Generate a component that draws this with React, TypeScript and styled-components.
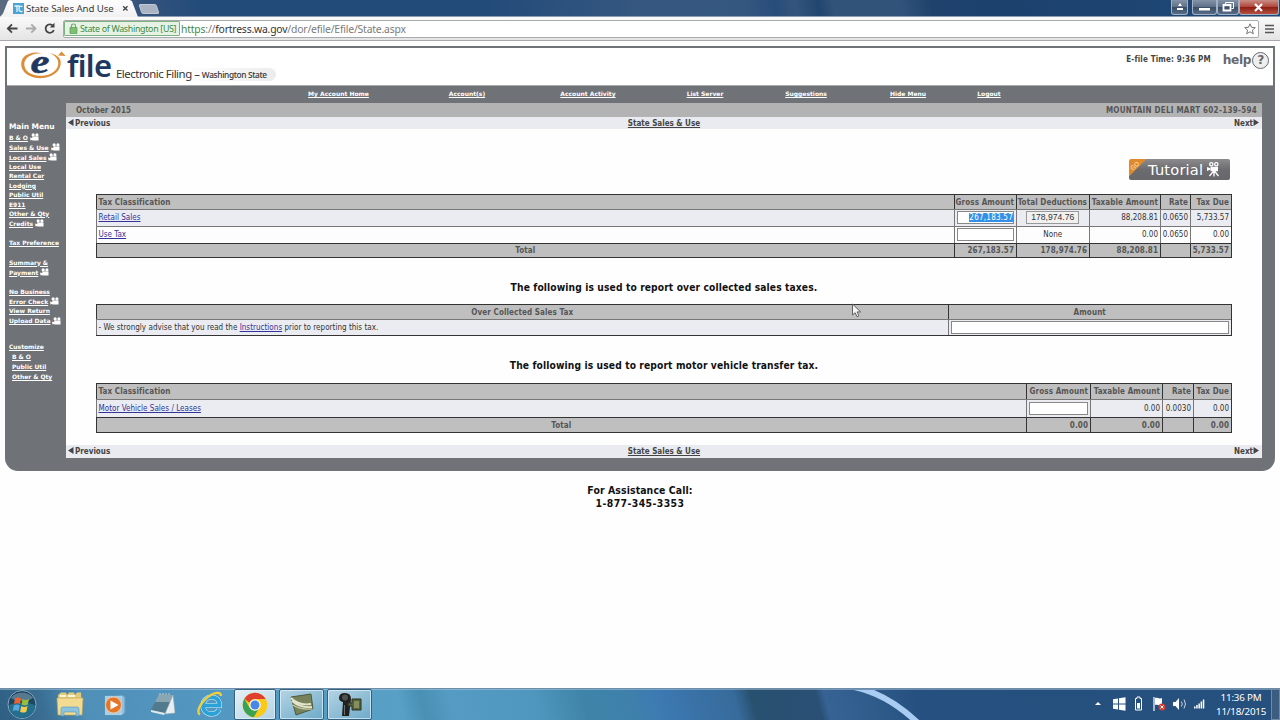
import { ReactNode } from "react";
import styled, { createGlobalStyle, css } from "styled-components";

const GlobalStyle = createGlobalStyle`
  * {
    box-sizing: border-box;
  }

  body {
    margin: 0;
    background: #fefefe;
    color: #444;
    font-family: "DejaVu Sans Condensed", "DejaVu Sans", Tahoma, sans-serif;
    font-size: 8px;
    overflow: hidden;
  }
`;

const uiFont = `"Noto Sans", "Open Sans", sans-serif`;

interface IMenuEntry {
  name: string;
  height: number;
  video?: boolean;
  indent?: boolean;
  gap?: number;
}

interface ICell {
  text?: ReactNode;
  align?: "left" | "center" | "right";
}

const TOP_MENU = [
  "My Account Home",
  "Account(s)",
  "Account Activity",
  "List Server",
  "Suggestions",
  "Hide Menu",
  "Logout",
];

const SIDE_MENU: IMenuEntry[] = [
  { name: "B & O", height: 10, video: true },
  { name: "Sales & Use", height: 10, video: true },
  { name: "Local Sales", height: 10, video: true },
  { name: "Local Use", height: 9 },
  { name: "Rental Car", height: 9.5 },
  { name: "Lodging", height: 9.5 },
  { name: "Public Util", height: 9.5 },
  { name: "E911", height: 9 },
  { name: "Other & Qty", height: 9.5 },
  { name: "Credits", height: 10.5, video: true },
  { name: "Tax Preference", height: 10, gap: 9 },
  { name: "Summary &", height: 10, gap: 9.5 },
  { name: "Payment", height: 10, video: true },
  { name: "No Business", height: 10, gap: 9 },
  { name: "Error Check", height: 10, video: true },
  { name: "View Return", height: 9.5 },
  { name: "Upload Data", height: 10, video: true },
  { name: "Customize", height: 10, gap: 16 },
  { name: "B & O", height: 10, indent: true },
  { name: "Public Util", height: 10, indent: true },
  { name: "Other & Qty", height: 10, indent: true },
];

/* ---------- browser window ---------- */

const Desktop = styled.div`
  position: relative;
  display: flex;
  flex-direction: column;
  width: 1280px;
  height: 720px;
  overflow: hidden;
`;

const TitleBar = styled.div`
  display: flex;
  flex: none;
  height: 17px;
  border-bottom: 1px solid #8c9db3;
  background: linear-gradient(
    80deg,
    #5b6b80 0,
    #35547c 140px,
    #234b7a 200px,
    #234b7a 480px,
    #365880 640px,
    #34577f 735px,
    #284d7a 765px,
    #34557d 785px,
    #21466f 808px,
    #315279 822px,
    #315279 890px,
    #1e426c 920px,
    #1c416d 1000px,
    #204a79 100%
  );
`;

const Tab = styled.div`
  display: flex;
  align-items: center;
  width: 138px;
  height: 17px;
  padding: 0 8px 0 13px;
  background: linear-gradient(#fdfdfd, #f1f1f1);
  clip-path: polygon(0 100%, 3px 80%, 8px 5%, 10px 0, 130px 0, 132px 8%, 138px 100%);
  color: #3c3c3c;
  font: 9.7px/16px ${uiFont};
  letter-spacing: -0.1px;
  white-space: nowrap;

  svg {
    flex: none;
  }

  span {
    width: 96px;
    margin-left: 2px;
  }
`;

const NewTab = styled.div`
  width: 18px;
  height: 10px;
  margin: 4px 0 0 2px;
  border: 1px solid #c1cad6;
  border-radius: 2px;
  background: #aab4c2;
  transform: skewX(18deg);
`;

const WindowButtons = styled.div`
  display: flex;
  height: 15px;
  margin-left: auto;
`;

const WindowButton = styled.div<{ $width: number; $close?: boolean; $gap?: number }>`
  display: flex;
  align-items: center;
  justify-content: center;
  width: ${(p) => p.$width}px;
  margin-right: ${(p) => p.$gap || 0}px;
  border: 1px solid #a3b0c2;
  border-top: 0;
  border-radius: 0 0 3px 3px;
  background: ${(p) =>
    p.$close
      ? "linear-gradient(#c98e88, #b0463b 48%, #8d1d14 52%, #b5503f)"
      : "linear-gradient(#8493a7, #5f7088 48%, #3b4d66 52%, #566b87)"};
`;

const Toolbar = styled.div`
  display: flex;
  flex: none;
  align-items: center;
  height: 24px;
  padding: 0 5px;
  border-bottom: 1px solid #a7a7a9;
  background: linear-gradient(#fafafa, #e4e4e4);

  > svg {
    flex: none;
  }
`;

const Omnibox = styled.div`
  display: flex;
  align-items: center;
  flex: 1;
  height: 18px;
  margin: 0 6px 0 7px;
  padding: 0 2px 0 0;
  border: 1px solid #a9abaf;
  border-radius: 2px;
  background: #fff;
`;

const Certificate = styled.div`
  display: flex;
  align-items: center;
  width: 116px;
  height: 15px;
  padding-left: 4px;
  border: 1px solid #7fb083;
  border-radius: 1px;
  background: #e6f3e4;
  color: #3f8a45;
  font: 8.9px/14px ${uiFont};
  letter-spacing: -0.32px;
  white-space: nowrap;

  span {
    margin-left: 2px;
  }
`;

const Url = styled.div`
  flex: 1;
  margin-left: 1px;
  color: #7a7a7a;
  font: 10.4px/16px ${uiFont};
  letter-spacing: -0.2px;

  em {
    color: #3f8a45;
    font-style: normal;
  }

  b {
    color: #333;
    font-weight: 400;
  }
`;

/* ---------- e-file page ---------- */

const Page = styled.main`
  flex: 1;
  padding: 5px 5px 0;
  background: #fefefe;
`;

const Shell = styled.div`
  width: 1270px;
  height: 425px;
  padding: 2px 2px 0;
  border-radius: 0 0 13px 13px;
  background: #6f7276;
`;

const Header = styled.header`
  display: flex;
  height: 38px;
  padding-left: 13px;
  background: #fff;
  border-bottom: 1px solid #aaa;
`;

const Brand = styled.div`
  display: flex;

  > svg {
    flex: none;
    margin-top: -8px;
  }
`;

const BrandName = styled.div`
  width: 46px;
  margin: -2px 0 0 1px;
  color: #20385f;
  font: 600 31px/39px ${uiFont};
  letter-spacing: -0.7px;
`;

const BrandTag = styled.div`
  align-self: flex-start;
  height: 13px;
  margin: 20px 0 0 3px;
  padding-right: 9px;
  border-radius: 0 7px 7px 0;
  background: linear-gradient(90deg, #fff 40%, #ececec);
  color: #333;
  font: 11.4px/12px ${uiFont};
  letter-spacing: -0.48px;
  white-space: nowrap;

  small {
    font-size: 8.3px;
    font-weight: 500;
    letter-spacing: -0.33px;
  }
`;

const HeaderTime = styled.div`
  margin: 6px 0 0 auto;
  color: #444;
  font-size: 8px;
  font-weight: 700;
  line-height: 11px;
  letter-spacing: 0.16px;
`;

const Help = styled.div`
  display: flex;
  align-items: flex-start;
  margin: 4px 4px 0 12px;
  color: #66686c;
  font: 700 12.2px/16px "DejaVu Sans", sans-serif;
  letter-spacing: -0.4px;
`;

const HelpMark = styled.span`
  width: 17px;
  height: 17px;
  margin-left: 1px;
  border: 1.5px solid #66686c;
  border-radius: 50%;
  background: #eee;
  line-height: 14px;
  text-align: center;
`;

const linkText = css`
  color: #fff;
  font: 700 6px/9px "DejaVu Sans", sans-serif;
  text-decoration: underline;
  white-space: nowrap;
`;

const TopMenu = styled.nav`
  display: grid;
  grid-template-columns: 127px 130px 112px 122px 80px 124px 38px;
  height: 17px;
  padding: 3px 0 0 268px;
  text-align: center;

  a {
    ${linkText}
    letter-spacing: 0;
  }
`;

const Body = styled.div`
  display: flex;
`;

const Sidebar = styled.aside`
  flex: none;
  width: 59px;
  padding: 18px 0 0 2px;
`;

const SidebarTitle = styled.div`
  height: 11px;
  color: #fff;
  font: 700 7.5px/12px "DejaVu Sans", sans-serif;
  letter-spacing: -0.1px;
  white-space: nowrap;
`;

const SidebarItem = styled.div<{ $height: number; $gap?: number; $indent?: boolean }>`
  display: flex;
  align-items: center;
  height: ${(p) => p.$height}px;
  margin-top: ${(p) => p.$gap || 0}px;
  padding-left: ${(p) => (p.$indent ? 3 : 0)}px;

  a {
    ${linkText}
    letter-spacing: -0.03px;
  }

  svg {
    flex: none;
    margin-left: 2px;
  }
`;

const Panel = styled.section`
  width: 1196px;
  height: 355px;
  background: #fefefe;
`;

const PeriodBar = styled.div`
  display: flex;
  justify-content: space-between;
  height: 14px;
  padding: 0 5px 0 10px;
  background: #b3b3b3;
  color: #555;
  font-weight: 700;
  line-height: 15px;

  span:last-child {
    letter-spacing: 0.26px;
  }
`;

const Pager = styled.div<{ $height: number }>`
  display: grid;
  grid-template-columns: 1fr 1fr 1fr;
  align-items: center;
  height: ${(p) => p.$height}px;
  padding: 1px 2px 0;
  background: #e9ebf0;
  color: #444;
  font-weight: 700;
  line-height: 12px;

  svg {
    margin-right: 1px;
  }

  span:nth-child(2) {
    text-align: center;
    text-decoration: underline;
  }

  span:nth-child(3) {
    text-align: right;
  }
`;

const Forms = styled.div`
  display: flex;
  flex-direction: column;
  height: 316px;
  padding: 30px 30px 0;
`;

const TutorialButton = styled.div`
  display: flex;
  align-items: center;
  align-self: flex-end;
  width: 101px;
  height: 21px;
  margin: 0 2px 14px 0;
  border-radius: 2px;
  background: linear-gradient(135deg, #e08a2e 12px, transparent 12.5px),
    linear-gradient(#8c8c8e, #6c6c70 50%, #67686c);
  color: #fff;
  font: 14.6px/20px "DejaVu Sans", sans-serif;
  letter-spacing: 0.2px;

  i {
    width: 12px;
    margin: -8px 7px 0 0;
    color: #ffe2b8;
    font: 6px/8px "DejaVu Sans", sans-serif;
    text-align: center;
    transform: rotate(-45deg);
  }

  svg {
    margin-left: 4px;
  }
`;

const SectionTitle = styled.h2<{ $height: number }>`
  flex: none;
  height: ${(p) => p.$height}px;
  margin: 0;
  padding: 1px 0 0;
  color: #111;
  font-size: 10.2px;
  font-weight: 700;
  line-height: 58px;
  letter-spacing: 0.12px;
  text-align: center;
`;

const Table = styled.div<{ $columns: string }>`
  display: grid;
  flex: none;
  grid-template-columns: ${(p) => p.$columns};
  width: 1136px;
  border: solid #333;
  border-width: 0 1px 1px 0;
`;

const Cell = styled.div<{
  $kind: "head" | "odd" | "even" | "total";
  $height: number;
  $align?: string;
}>`
  display: flex;
  align-items: center;
  justify-content: ${(p) =>
    p.$align === "left" ? "flex-start" : p.$align === "right" ? "flex-end" : "center"};
  height: ${(p) => p.$height}px;
  padding: 0 2px 1px 1.5px;
  border-top: 1px solid #777;
  border-left: 1px solid #777;
  background: ${(p) => (p.$kind === "odd" ? "#eaecf2" : "#fdfdfe")};
  color: #333;
  letter-spacing: 0.02px;
  white-space: pre;

  ${(p) =>
    (p.$kind === "head" || p.$kind === "total") &&
    css`
      padding-bottom: 0;
      border-color: #333;
      background: #bfbfbf;
      color: #555;
      font-weight: 700;
      letter-spacing: 0.1px;
    `}
`;

const Link = styled.a`
  color: #33339a;
  text-decoration: underline;
`;

const Field = styled.div<{ $width: number }>`
  display: flex;
  align-items: center;
  justify-content: flex-end;
  width: ${(p) => p.$width}px;
  height: 13px;
  border: 1px solid #888;
  background: #fff;
`;

const Selected = styled.span`
  background: #3390e8;
  color: #fff;
  letter-spacing: 0.25px;
`;

const AmountButton = styled.div`
  width: 53px;
  height: 13px;
  border: 1px solid #999;
  background: #f1f1f1;
  color: #333;
  font: 8.6px/11px "Liberation Sans", sans-serif;
  letter-spacing: 0;
  text-align: center;
`;

const Assistance = styled.footer`
  padding-top: 13px;
  color: #111;
  font-size: 10.4px;
  font-weight: 700;
  line-height: 13px;
  letter-spacing: 0.1px;
  text-align: center;

  span {
    letter-spacing: 0.4px;
  }
`;

const Cursor = styled.svg`
  position: absolute;
  top: 303px;
  left: 851px;
`;

/* ---------- taskbar ---------- */

const Taskbar = styled.div`
  display: flex;
  flex: none;
  align-items: center;
  height: 32px;
  border-top: 1px solid #6f8ca7;
  box-shadow: inset 0 1px 0 rgba(190, 215, 235, 0.45);
  background: linear-gradient(
    75deg,
    #2f5f83 0,
    #3a6f93 45px,
    #4f8fb8 85px,
    #549bc4 260px,
    #58a0c6 390px,
    #4a90b4 412px,
    #559bc3 440px,
    #4f97be 520px,
    #3f84a8 570px,
    #3e80ab 615px,
    #3d7ab3 640px,
    #3a73a8 670px,
    #376b9b 715px,
    #28506f 732px,
    #2a5075 795px,
    #376394 803px,
    #2f5b8b 850px,
    #25507f 890px,
    #26507d 100%
  );
`;

const Swoosh = styled.svg`
  position: absolute;
  top: 690px;
  left: 840px;
`;

const TaskIcons = styled.div`
  display: flex;
  align-items: center;
  height: 31px;
`;

const TaskButton = styled.div<{ $width: number; $open?: boolean; $active?: boolean }>`
  display: flex;
  align-items: center;
  justify-content: center;
  width: ${(p) => p.$width}px;
  height: 31px;

  ${(p) =>
    p.$open &&
    css`
      margin-right: 3px;
      border: 1px solid #35617f;
      border-radius: 2px;
      box-shadow: inset 0 0 0 1px rgba(230, 244, 252, 0.7);
      background: ${p.$active
        ? "linear-gradient(150deg, #e5f0f6, #b2d2e4)"
        : "linear-gradient(150deg, #b5d3e3, #6dabc9)"};
    `}
`;

const Tray = styled.div`
  display: flex;
  align-items: center;
  height: 31px;
  margin-left: auto;
`;

const Clock = styled.div`
  width: 50px;
  margin: 0 5px 0 6px;
  color: #fff;
  font: 9.8px/14px ${uiFont};
  letter-spacing: -0.2px;
  text-align: center;
  white-space: nowrap;
`;

const ShowDesktop = styled.div`
  width: 9px;
  height: 31px;
  border: 1px solid #7089a5;
  background: #3c5c80;
`;

const VideoIcon = () => (
  <svg width="9" height="8" viewBox="0 0 10 9" fill="#fff">
    <circle cx="3.500" cy="2.200" r="1.800" />
    <circle cx="7.700" cy="2.200" r="1.800" />
    <path d="M2.500 4h7v4.300h-7zM0 5l3 1v1.500L.5 8.500z" />
  </svg>
);

const CameraIcon = () => (
  <svg width="13" height="15" viewBox="0 0 13 15" fill="#fff">
    <path
      fillRule="evenodd"
      d="M4.3 0a2.3 2.3 0 1 0 0 4.6 2.3 2.3 0 0 0 0-4.6zm0 1.3a1 1 0 1 1 0 2 1 1 0 0 1 0-2zM9.3 0a2.3 2.3 0 1 0 0 4.6 2.3 2.3 0 0 0 0-4.6zm0 1.3a1 1 0 1 1 0 2 1 1 0 0 1 0-2z"
    />
    <path d="M3.500 4.700H11v4.600H3.500zM0 5l3.200 1.200v1.600L0 9z" />
    <path d="M7 8.500L2.500 14M7 8.500v6M7 8.500l4.500 5.500" stroke="#fff" strokeWidth="1.300" />
  </svg>
);

const BackIcon = () => (
  <svg width="19" height="13" viewBox="0 0 19 13" fill="none" stroke="#444" strokeWidth="1.800">
    <path d="M12.500 6.500H3M7 2.300L2.800 6.500 7 10.700" />
  </svg>
);

const ForwardIcon = () => (
  <svg width="19" height="13" viewBox="0 0 19 13" fill="none" stroke="#aaa" strokeWidth="1.800">
    <path d="M2 6.500h9M7.300 2.300l4.200 4.200-4.200 4.200" />
  </svg>
);

const EfileMark = () => (
  <svg width="46" height="46" viewBox="0 -10 46 46">
    <path
      d="M22 3.200C10 .6 1 6 1.200 14.500c.2 9.500 12.500 15.500 24 13.200 10-2 16-8.500 15.500-15.500C40.500 7.500 36 4.500 30 3.300c5.500 2.400 8.500 6 8.300 10.400-.3 6-6.500 11-13.800 11.800C12 27 4.500 21.500 4.300 14.500 4 8 11 3 22 3.200z"
      fill="#dc8d37"
    />
    <path d="M41.500 1.500l4.300 4.500-7.800-.5z" fill="#dc8d37" />
    <text
      x="10.500"
      y="22.500"
      fill="#20385f"
      stroke="#20385f"
      strokeWidth=".5"
      fontFamily="Liberation Serif"
      fontStyle="italic"
      fontWeight="700"
      fontSize="33"
      textLength="19"
      lengthAdjust="spacingAndGlyphs"
    >
      e
    </text>
  </svg>
);

const StartIcon = () => (
  <svg width="32" height="31" viewBox="0 0 32 31">
    <circle cx="16" cy="15.500" r="14" fill="#1f4563" stroke="#86a9be" />
    <path d="M3 16a13 13 0 0 0 26 0c-7-3-18-3-26 0z" fill="#246e8e" />
    <path d="M5 9C9 2 23 2 27 9c-5 4-17 4-22 0z" fill="#7d9cae" opacity=".6" />
    <path d="M9 9.500c2-1.200 4-1.200 6 0l-1 5.500c-2-1.100-4-1.100-6 0z" fill="#ea6330" />
    <path d="M16.500 10c2 1.200 4 1.200 6.500 0l-1.200 5.500c-2 1.200-4 1.200-6.200 0z" fill="#93bf3c" />
    <path d="M7.800 16.500c2-1.200 4-1.200 6 0l-1.200 5.700c-2-1.200-4-1.200-6 0z" fill="#55a9df" />
    <path d="M15.200 17c2 1.200 4 1.200 6.400 0l-1.300 5.700c-2 1.200-4 1.200-6.200 0z" fill="#f5cc4a" />
  </svg>
);

const FolderIcon = () => (
  <svg width="28" height="27" viewBox="0 0 28 27">
    <path d="M2 4l3-2.500h5L11 4l2-2.500h5L19 4l2-2.500h4L26 22H3z" fill="#e5cc79" />
    <path d="M4 4h6v2H4zM12 4h7v2h-7z" fill="#f9f5df" />
    <path d="M1 7h26l-1 17H2z" fill="#f2dc92" stroke="#c5a85a" strokeWidth=".7" />
    <path d="M5 25v-7q0-2 2-2h14q2 0 2 2v7h-3v-4H8v4z" fill="#8cc4df" stroke="#5795b5" strokeWidth=".6" />
  </svg>
);

const MediaIcon = () => (
  <svg width="24" height="24" viewBox="0 0 24 24">
    <path d="M2 3l17-1 3 2v16l-3 2H2z" fill="#8fc0df" stroke="#6098bd" />
    <path d="M2 3h17v19H2z" fill="#aacfe5" />
    <circle cx="10.500" cy="12" r="8" fill="#e57528" stroke="#f7c7a0" />
    <path d="M7.500 7.500l8 4.500-8 4.500z" fill="#fff" />
  </svg>
);

const NotesIcon = () => (
  <svg width="26" height="25" viewBox="0 0 26 25">
    <path d="M9 2l14 1-8 18L1 18z" fill="#52798c" />
    <path d="M9 2l14 1-3 7L5 10z" fill="#8aa6b2" />
    <path d="M1 18l14 3-1 2L1 20z" fill="#dfe8ec" />
    <path d="M23 3l2 18-10 1z" fill="#e9eef0" stroke="#9aacb5" strokeWidth=".5" />
    <path d="M10 1v2M13 1v2M16 1v2M19 1v2" stroke="#b9c9d0" />
  </svg>
);

const ExplorerIcon = () => (
  <svg width="28" height="27" viewBox="0 0 28 27" fill="none">
    <path
      d="M7 14.500h16.500C23.500 9 20 6 15.500 6S7 9.500 7 14.500 10.500 23 15.500 23c3.600 0 6.400-2 7.400-4.500"
      stroke="#e0f3fb"
      strokeWidth="5"
    />
    <path
      d="M7 14.500h16.500C23.500 9 20 6 15.500 6S7 9.500 7 14.500 10.500 23 15.500 23c3.600 0 6.400-2 7.400-4.500"
      stroke="#2ba2d7"
      strokeWidth="4"
    />
    <path d="M4 23.500C-1 21 6 9 15 4c5-3 10-3 10 1" stroke="#f2cf3a" strokeWidth="2.300" />
  </svg>
);

const ChromeIcon = () => (
  <svg width="26" height="26" viewBox="0 0 26 26">
    <circle cx="13" cy="13" r="12.300" fill="#fbc917" />
    <path d="M2.400 6.800A12.300 12.300 0 0 1 23.700 7H13a6 6 0 0 0-5.500 3.700z" fill="#e0402f" />
    <path d="M2.400 6.800a12.300 12.300 0 0 0 9.300 18.400l5-8.500a6 6 0 0 1-9-.7z" fill="#3aa254" />
    <circle cx="13" cy="13" r="5.800" fill="#f4f7f9" />
    <circle cx="13" cy="13" r="4.500" fill="#4a86e6" />
  </svg>
);

const LedgerIcon = () => (
  <svg width="28" height="26" viewBox="0 0 28 26" fill="none">
    <path d="M3 5l20-3 2 15-17 6z" fill="#77825a" stroke="#505a3d" />
    <path d="M3 6q8 8 20 6M4 9q8 7 20 6" stroke="#e3e5cb" strokeWidth="1.800" />
    <path d="M4.500 13q8 5 20 4" stroke="#c6caa8" strokeWidth="1.200" />
  </svg>
);

const RecorderIcon = () => (
  <svg width="24" height="27" viewBox="0 0 24 27">
    <path d="M1 7q0-5 6-5 6 0 6 6l-2 17H4L5 11Q1 10 1 7z" fill="#20211f" />
    <circle cx="7" cy="6.500" r="3" fill="#4d5152" />
    <path d="M10 12h4V8h9v11h-9v-4h-4z" fill="#56603d" stroke="#2d3322" />
    <path d="M16 10h5v7h-5z" fill="#848f60" />
    <path d="M6 14h1v10H6z" fill="#6b6e6d" />
  </svg>
);

const TrayIcons = () => (
  <svg width="115" height="21" viewBox="0 0 115 21" fill="#fff">
    <path d="M0 11l3-3 3 3z" />
    <path d="M18 5.300l5-.8v5h-5zM24 4.300l6.500-1v6.200H24zM18 10.500h5v5l-5-.8zM24 10.500h6.500v6.300l-6.500-1z" />
    <path d="M42 3h3v1.500h1.500V16h-6V4.500H42z" fill="none" stroke="#fff" />
    <path d="M42 9h3v5.500h-3z" />
    <path d="M59 3v14" stroke="#fff" strokeWidth="1.200" />
    <path d="M60 4c3-1 3 1.500 7 0v7c-4 1.500-4-1-7 0z" />
    <circle cx="67" cy="13" r="3.500" fill="#d23a34" />
    <path d="M65.500 11.500l3 3m0-3l-3 3" stroke="#fff" />
    <path d="M78 8h2.500L84 4v12l-3.500-4H78z" />
    <path d="M86.500 7.500q1.500 2.500 0 5M89 5.500q3 4.500 0 9" fill="none" stroke="#c9d7e5" />
    <path d="M99 12.500h1.500v2H99zM101.200 11h1.500v3.500h-1.500zM103.400 9.500h1.500v5h-1.500zM105.600 7.500h1.500v7h-1.500zM107.800 5.500h1.500v9h-1.500z" />
  </svg>
);

const Row = ({
  kind,
  height,
  cells,
}: {
  kind: "head" | "odd" | "even" | "total";
  height: number;
  cells: ICell[];
}) => (
  <>
    {cells.map((cell, index) => (
      <Cell key={index} $kind={kind} $height={height} $align={cell.align || "right"}>
        {cell.text}
      </Cell>
    ))}
  </>
);

const PagerBar = ({ height }: { height: number }) => (
  <Pager $height={height}>
    <span>
      <svg width="6" height="7" viewBox="0 0 6 7">
        <path d="M5.500 0v7L0 3.500z" fill="#444" />
      </svg>
      Previous
    </span>
    <span>State Sales &amp; Use</span>
    <span>
      Next
      <svg width="6" height="7" viewBox="0 0 6 7">
        <path d="M.5 0v7L6 3.500z" fill="#444" />
      </svg>
    </span>
  </Pager>
);

const BrowserChrome = () => (
  <>
    <TitleBar>
      <Tab>
        <svg width="11" height="11" viewBox="0 0 11 11">
          <path d="M0 0h11v11H0z" fill="#4ba3d3" />
          <path
            d="M1.500 3h5M4 3v6M9.500 3.500q-3-1.500-3.500 2t3.500 3"
            stroke="#e6f5fc"
            strokeWidth="1.300"
            fill="none"
          />
        </svg>
        <span>State Sales And Use</span>
        <svg width="7" height="7" viewBox="0 0 7 7">
          <path d="M1.200 1.200l4.300 4.300m0-4.300L1.200 5.500" stroke="#444" strokeWidth="1.300" />
        </svg>
      </Tab>
      <NewTab />
      <WindowButtons>
        <WindowButton $width={17} $gap={4}>
          <svg width="8" height="8" viewBox="0 0 8 8" fill="#fff">
            <path d="M4 0l2 3H2zM1 5h6v2H1z" />
          </svg>
        </WindowButton>
        <WindowButton $width={25}>
          <svg width="11" height="8" viewBox="0 0 11 8">
            <path d="M0 5h11v2.500H0z" fill="#fff" />
          </svg>
        </WindowButton>
        <WindowButton $width={22}>
          <svg width="12" height="10" viewBox="0 0 12 10" fill="none" stroke="#fff">
            <path d="M3.500 2.500v-2h8v6h-2" />
            <path d="M1.500 3h7v5.500h-7z" strokeWidth="1.800" />
          </svg>
        </WindowButton>
        <WindowButton $width={40} $close $gap={1}>
          <svg width="10" height="9" viewBox="0 0 10 9">
            <path d="M1 1l7 7m0-7l-7 7" stroke="#fff" strokeWidth="2.200" />
          </svg>
        </WindowButton>
      </WindowButtons>
    </TitleBar>
    <Toolbar>
      <BackIcon />
      <ForwardIcon />
      <svg width="13" height="13" viewBox="0 0 13 13">
        <path d="M10 3.800A4.200 4.200 0 1 0 10.800 8" fill="none" stroke="#444" strokeWidth="1.800" />
        <path d="M11.500.8v4.700H6.800z" fill="#444" />
      </svg>
      <Omnibox>
        <Certificate>
          <svg width="9" height="11" viewBox="0 0 8 11">
            <path d="M2 5V3q0-2 2-2t2 2v2" fill="none" stroke="#75a975" strokeWidth="1.200" />
            <path d="M.5 4.500h7v6h-7z" fill="#7fc06f" stroke="#579c54" strokeWidth=".7" />
          </svg>
          <span>State of Washington [US]</span>
        </Certificate>
        <Url>
          <em>https</em>://<b>fortress.wa.gov</b>/dor/efile/Efile/State.aspx
        </Url>
        <svg width="12" height="12" viewBox="0 0 12 12">
          <path
            d="M6 .8l1.500 3.500 3.800.3-2.900 2.500.9 3.700L6 8.800l-3.300 2 .9-3.700L.7 4.600l3.800-.3z"
            fill="#fff"
            stroke="#666"
            strokeWidth=".9"
          />
        </svg>
      </Omnibox>
      <svg width="10" height="10" viewBox="0 0 10 10">
        <path d="M0 1.500h9M0 5h9M0 8.500h9" stroke="#555" strokeWidth="1.700" />
      </svg>
    </Toolbar>
  </>
);

const SalesTable = () => (
  <Table $columns="858px 62px 73px 71px 30px 41px">
    <Row
      kind="head"
      height={15}
      cells={[
        { text: "Tax Classification", align: "left" },
        { text: "Gross Amount" },
        { text: "Total Deductions" },
        { text: "Taxable Amount" },
        { text: "Rate" },
        { text: "Tax Due" },
      ]}
    />
    <Row
      kind="odd"
      height={17}
      cells={[
        { text: <Link>Retail Sales</Link>, align: "left" },
        {
          text: (
            <Field $width={58}>
              <Selected>267,183.57</Selected>
            </Field>
          ),
        },
        { text: <AmountButton>178,974.76</AmountButton>, align: "center" },
        { text: "88,208.81" },
        { text: "0.0650" },
        { text: "5,733.57" },
      ]}
    />
    <Row
      kind="even"
      height={17}
      cells={[
        { text: <Link>Use Tax</Link>, align: "left" },
        { text: <Field $width={58} /> },
        { text: "None", align: "center" },
        { text: "0.00" },
        { text: "0.0650" },
        { text: "0.00" },
      ]}
    />
    <Row
      kind="total"
      height={14}
      cells={[
        { text: "Total", align: "center" },
        { text: "267,183.57" },
        { text: "178,974.76" },
        { text: "88,208.81" },
        {},
        { text: "5,733.57" },
      ]}
    />
  </Table>
);

const OverCollectedTable = () => (
  <Table $columns="852px 283px">
    <Row
      kind="head"
      height={15}
      cells={[
        { text: "Over Collected Sales Tax", align: "center" },
        { text: "Amount", align: "center" },
      ]}
    />
    <Row
      kind="odd"
      height={16}
      cells={[
        {
          text: (
            <>
              - We strongly advise that you read the <Link>Instructions</Link> prior to reporting this tax.
            </>
          ),
          align: "left",
        },
        { text: <Field $width={280} /> },
      ]}
    />
  </Table>
);

const VehicleTable = () => (
  <Table $columns="930px 64px 72px 31px 38px">
    <Row
      kind="head"
      height={16}
      cells={[
        { text: "Tax Classification", align: "left" },
        { text: "Gross Amount" },
        { text: "Taxable Amount" },
        { text: "Rate" },
        { text: "Tax Due" },
      ]}
    />
    <Row
      kind="odd"
      height={18}
      cells={[
        { text: <Link>Motor Vehicle Sales / Leases</Link>, align: "left" },
        { text: <Field $width={59} /> },
        { text: "0.00" },
        { text: "0.0030" },
        { text: "0.00" },
      ]}
    />
    <Row
      kind="total"
      height={15}
      cells={[
        { text: "Total", align: "center" },
        { text: "0.00" },
        { text: "0.00" },
        {},
        { text: "0.00" },
      ]}
    />
  </Table>
);

const App = () => {
  return (
    <Desktop>
      <GlobalStyle />
      <BrowserChrome />
      <Page>
        <Shell>
          <Header>
            <Brand>
              <EfileMark />
              <BrandName>file</BrandName>
              <BrandTag>
                Electronic Filing – <small>Washington State</small>
              </BrandTag>
            </Brand>
            <HeaderTime>E-file Time: 9:36 PM</HeaderTime>
            <Help>
              help<HelpMark>?</HelpMark>
            </Help>
          </Header>
          <TopMenu>
            {TOP_MENU.map((name) => (
              <a key={name}>{name}</a>
            ))}
          </TopMenu>
          <Body>
            <Sidebar>
              <SidebarTitle>Main Menu</SidebarTitle>
              {SIDE_MENU.map((item, index) => (
                <SidebarItem
                  key={item.name + index}
                  $height={item.height}
                  $gap={item.gap}
                  $indent={item.indent}
                >
                  <a>{item.name}</a>
                  {item.video && <VideoIcon />}
                </SidebarItem>
              ))}
            </Sidebar>
            <Panel>
              <PeriodBar>
                <span>October 2015</span>
                <span>MOUNTAIN DELI MART 602-139-594</span>
              </PeriodBar>
              <PagerBar height={12} />
              <Forms>
                <TutorialButton>
                  <i>GO</i>Tutorial
                  <CameraIcon />
                </TutorialButton>
                <SalesTable />
                <SectionTitle $height={46}>
                  The following is used to report over collected sales taxes.
                </SectionTitle>
                <OverCollectedTable />
                <SectionTitle $height={47}>
                  The following is used to report motor vehicle transfer tax.
                </SectionTitle>
                <VehicleTable />
              </Forms>
              <PagerBar height={13} />
            </Panel>
          </Body>
        </Shell>
        <Assistance>
          For Assistance Call:
          <br />
          <span>1-877-345-3353</span>
        </Assistance>
      </Page>
      <Taskbar>
        <Swoosh width="100" height="30" viewBox="0 0 100 30" fill="none">
          <path d="M14 -3Q48 4 79 34" stroke="#a9cdf2" strokeWidth="6" />
        </Swoosh>
        <TaskIcons>
          <TaskButton $width={44}>
            <StartIcon />
          </TaskButton>
          <TaskButton $width={52}>
            <FolderIcon />
          </TaskButton>
          <TaskButton $width={38}>
            <MediaIcon />
          </TaskButton>
          <TaskButton $width={58}>
            <NotesIcon />
          </TaskButton>
          <TaskButton $width={36}>
            <ExplorerIcon />
          </TaskButton>
          <TaskButton $width={6} />
          <TaskButton $width={42} $open $active>
            <ChromeIcon />
          </TaskButton>
          <TaskButton $width={45} $open>
            <LedgerIcon />
          </TaskButton>
          <TaskButton $width={45} $open>
            <RecorderIcon />
          </TaskButton>
        </TaskIcons>
        <Tray>
          <TrayIcons />
          <Clock>
            11:36 PM
            <br />
            11/18/2015
          </Clock>
          <ShowDesktop />
        </Tray>
      </Taskbar>
      <Cursor width="10" height="15" viewBox="0 0 10 15">
        <path
          d="M1.500 1v11l2.600-2.300 1.900 4 1.900-.8-1.800-4h3.500z"
          fill="#f4f4f4"
          stroke="#555"
          strokeWidth=".9"
        />
      </Cursor>
    </Desktop>
  );
};

export default App;
